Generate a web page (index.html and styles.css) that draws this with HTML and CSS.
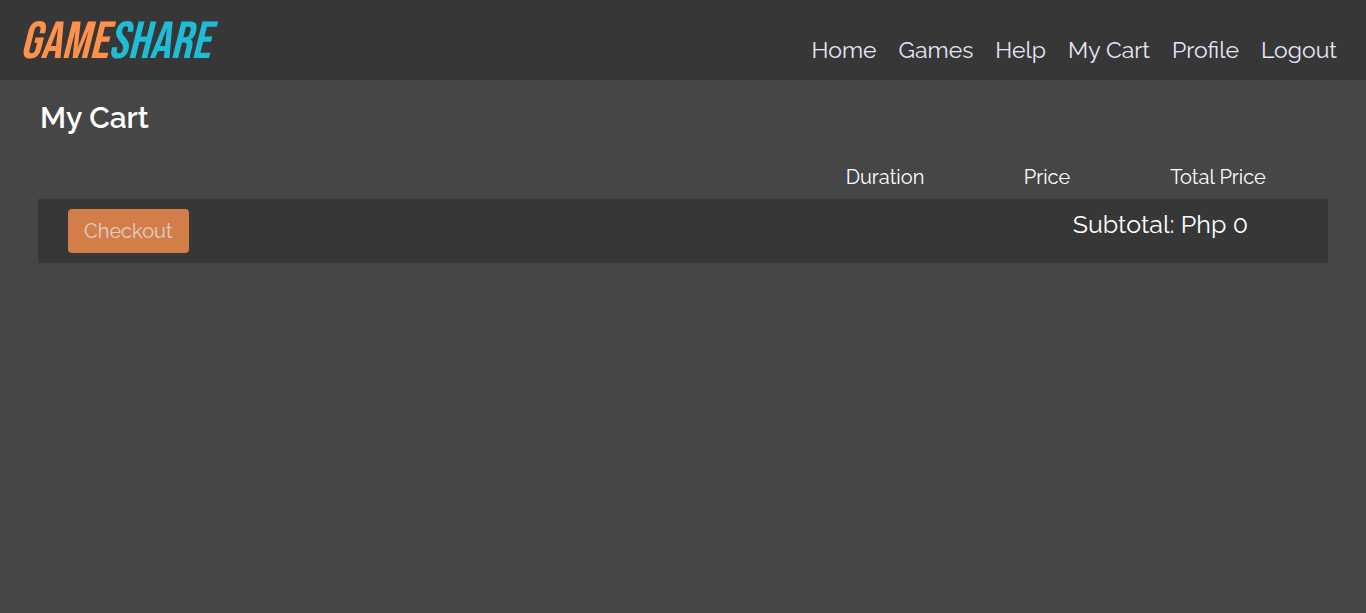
FILE: index.html
```
<!DOCTYPE html>
<html lang="en">
<head>
<meta charset="utf-8">
<meta name="viewport" content="width=device-width, initial-scale=1">
<title>My Cart - GameShare</title>
<link rel="stylesheet" href="styles.css">
</head>
<body>
<header class="topbar">
  <a class="logo" href="#" aria-label="GAMESHARE"><span class="logo-game">GAME</span><span class="logo-share">SHARE</span></a>
  <nav class="nav" aria-label="Main">
    <a href="#">Home</a>
    <a href="#">Games</a>
    <a href="#">Help</a>
    <a href="#">My Cart</a>
    <a href="#">Profile</a>
    <a href="#">Logout</a>
  </nav>
</header>
<main class="cart">
  <h1 class="title">My Cart</h1>
  <table class="items">
    <thead>
      <tr>
        <td class="col-item"></td>
        <th class="col-duration" scope="col">Duration</th>
        <th class="col-price" scope="col">Price</th>
        <th class="col-total" scope="col">Total Price</th>
        <td class="col-end"></td>
      </tr>
    </thead>
  </table>
  <section class="summary">
    <button class="checkout" type="button" disabled>Checkout</button>
    <p class="subtotal">Subtotal: Php 0</p>
  </section>
</main>
</body>
</html>
```
FILE: styles.css
```
* {
  box-sizing: border-box;
}

body {
  margin: 0;
  min-height: 100vh;
  background: #464646;
  color: #fff;
  font-family: Raleway, Lato, sans-serif;
  font-size: 20px;
  line-height: 24px;
}

.topbar {
  display: flex;
  justify-content: space-between;
  min-height: 80px;
  padding: 0 29px 0 20px;
  background: #373737;
}

.logo {
  padding-top: 17px;
  font: italic 400 52px/52px "Bebas Neue", "Open Sans Condensed", sans-serif;
  text-decoration: none;
}

.logo-game {
  color: #ff914d;
}

.logo-share {
  color: #1fbcd6;
}

.nav {
  display: flex;
  gap: 22px;
  padding-top: 36px;
  font-size: 23px;
  line-height: 28px;
}

.nav a {
  color: #e6e6fa;
  text-decoration: none;
}

.cart {
  padding: 20px 38px;
}

.title {
  margin: 0 0 24px 2px;
  font-size: 30px;
  font-weight: 600;
  line-height: 36px;
}

.items {
  width: 100%;
  border-collapse: collapse;
  table-layout: fixed;
}

.items th,
.items td {
  padding: 5px 0 10px;
  font-weight: 400;
  text-align: center;
}

.col-duration {
  width: 164px;
}

.col-price {
  width: 160px;
}

.col-total {
  width: 182px;
}

.col-end {
  width: 19px;
}

.summary {
  display: flex;
  justify-content: space-between;
  align-items: flex-start;
  padding: 10px 80px 10px 30px;
  background: #373737;
}

.checkout {
  padding: 10px 16px;
  border: 0;
  border-radius: 4px;
  background: #d37e48;
  color: #dbd1cb;
  font: inherit;
}

.subtotal {
  margin: 0;
  font-size: 25px;
  line-height: 30px;
}
```
